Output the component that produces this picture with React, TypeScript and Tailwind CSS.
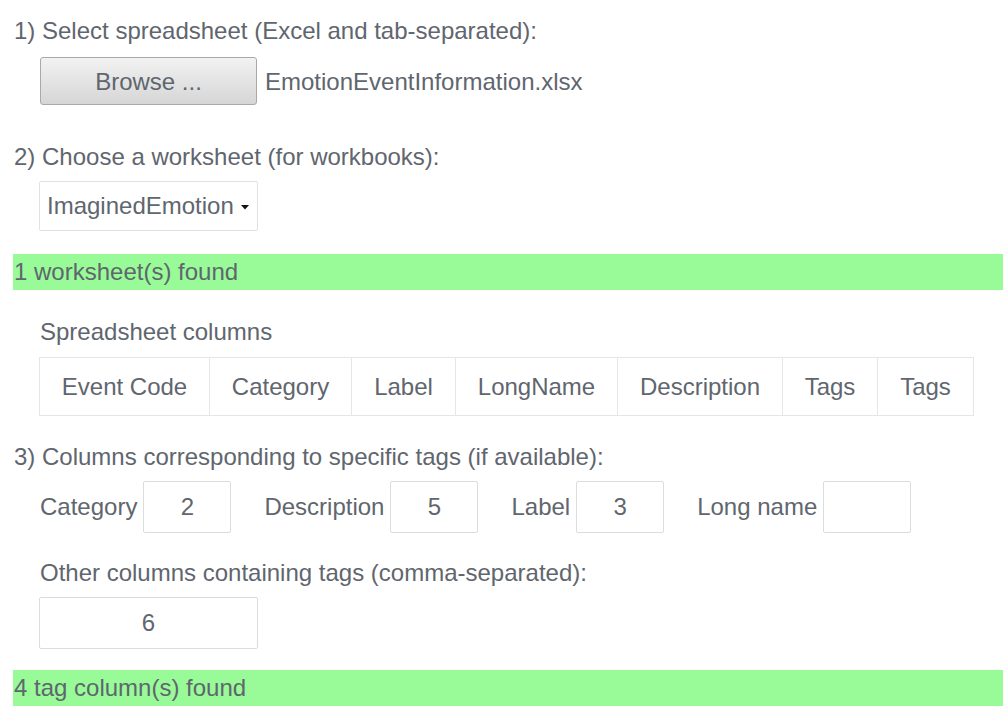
import React from "react";

const cols: [string, number][] = [
  ["Event Code", 170],
  ["Category", 142],
  ["Label", 104],
  ["LongName", 162],
  ["Description", 165],
  ["Tags", 95],
  ["Tags", 96],
];

function NumBox({ value, w = "w-[88px]" }: { value: string; w?: string }) {
  return (
    <div
      className={`${w} h-[52px] border border-[#dcdcdc] rounded-[2px] flex items-center justify-center bg-white`}
    >
      {value}
    </div>
  );
}

export default function App() {
  return (
    <div
      className="w-[1003px] h-[723px] bg-white text-[#5f666e] text-[24px] leading-[30px] pl-[13px] pt-[16px] overflow-hidden"
      style={{ fontFamily: '"Liberation Sans", Arial, sans-serif' }}
    >
      <div className="h-[30px] pl-px">1) Select spreadsheet (Excel and tab-separated):</div>
      <div className="mt-[11px] ml-[27px] flex items-center gap-[8px]">
        <div className="w-[217px] h-[48px] rounded-[3px] border border-[#a9a9a9] bg-gradient-to-b from-[#f2f2f2] to-[#d6d6d6] flex items-center justify-center pt-[2px]">
          Browse ...
        </div>
        <span className="pt-[2px]">EmotionEventInformation.xlsx</span>
      </div>

      <div className="mt-[37px] h-[30px] pl-px">2) Choose a worksheet (for workbooks):</div>
      <div className="mt-[9px] ml-[26px] w-[219px] h-[50px] border border-[#e0e0e8] rounded-[2px] flex items-center pl-[7px]">
        <span>ImaginedEmotion</span>
        <svg width="8" height="5" viewBox="0 0 8 5" className="ml-[7px] mt-[2px]">
          <polygon points="0,0 8,0 4,4.5" fill="#111" />
        </svg>
      </div>

      <div className="mt-[23px] h-[36px] bg-[#98fb98] flex items-center pl-px">1 worksheet(s) found</div>

      <div className="mt-[27px] ml-[27px] h-[30px]">Spreadsheet columns</div>
      <div className="mt-[10px] ml-[26px] flex w-fit border border-[#e6e6e6]">
        {cols.map(([c, w], i) => (
          <div
            key={i}
            className={`h-[57px] flex items-center justify-center ${i > 0 ? "border-l border-[#e6e6e6]" : ""}`}
            style={{ width: w - (i > 0 ? 0 : 1) }}
          >
            {c}
          </div>
        ))}
      </div>

      <div className="mt-[26px] h-[30px] pl-px">3) Columns corresponding to specific tags (if available):</div>
      <div className="mt-[9px] ml-[27px] flex items-center">
        <span className="mr-[6px]">Category</span>
        <NumBox value="2" />
        <span className="ml-[33px] mr-[6px]">Description</span>
        <NumBox value="5" />
        <span className="ml-[33px] mr-[6px]">Label</span>
        <NumBox value="3" />
        <span className="ml-[33px] mr-[6px]">Long name</span>
        <NumBox value="" />
      </div>

      <div className="mt-[25px] ml-[27px] h-[30px]">Other columns containing tags (comma-separated):</div>
      <div className="mt-[9px] ml-[26px]">
        <NumBox value="6" w="w-[219px]" />
      </div>

      <div className="mt-[21px] h-[36px] bg-[#98fb98] flex items-center pl-px">4 tag column(s) found</div>
    </div>
  );
}
